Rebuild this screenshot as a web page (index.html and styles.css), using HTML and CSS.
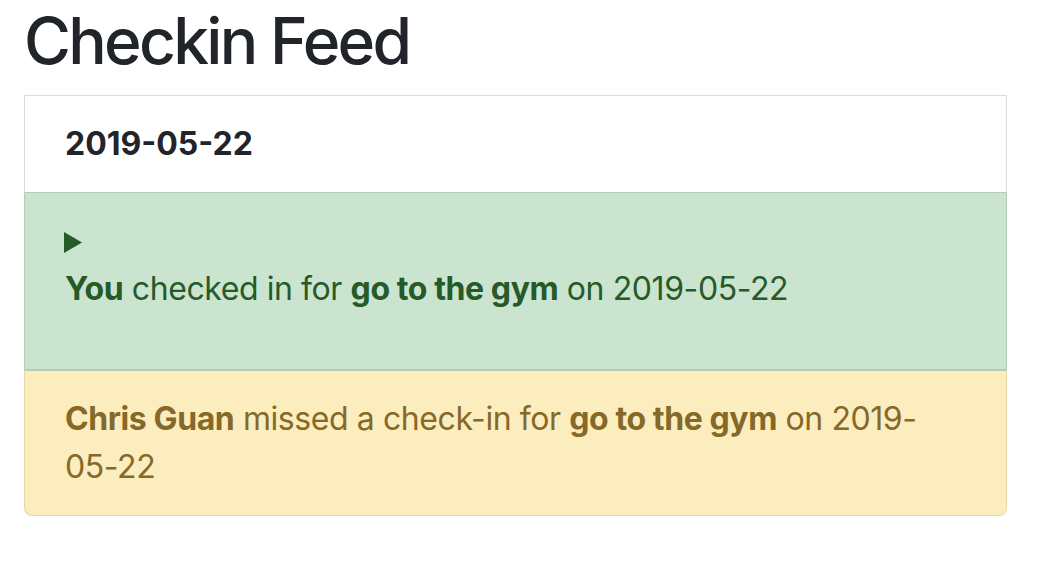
FILE: index.html
```html
<!DOCTYPE html>
<html>
<head>
<meta charset="utf-8">
<link rel="stylesheet" href="styles.css">
</head>
<body>
<main class="page">
  <h2 class="title">Checkin Feed</h2>
  <ul class="feed">
    <li class="item item-head"><strong>2019-05-22</strong></li>
    <li class="item item-success">
      <div class="summary"><svg class="marker" width="18" height="21" viewBox="0 0 18 21"><polygon points="0,0 18,10.5 0,21" fill="currentColor"/></svg></div>
      <p class="msg"><strong>You</strong> checked in for <strong>go to the gym</strong> on 2019-05-22</p>
    </li>
    <li class="item item-warning">
      <p class="msg last"><strong>Chris Guan</strong> missed a check-in for <strong>go to the gym</strong> on 2019-05-22</p>
    </li>
  </ul>
</main>
</body>
</html>
```

FILE: styles.css
```css
html, body {
  margin: 0;
  padding: 0;
  background: #fff;
}
body {
  font-family: Inter, "Liberation Sans", sans-serif;
  font-size: 32px;
  line-height: 48px;
  color: #212529;
}
.page {
  padding: 0 24px;
}
.title {
  margin: 0 0 15px 0;
  padding-top: 3px;
  font-size: 64px;
  font-weight: 500;
  line-height: 76.8px;
  letter-spacing: -0.042em;
  color: #212529;
}
.feed {
  list-style: none;
  margin: 0;
  padding: 0;
  width: 983px;
}
.item {
  padding: 24px 40px;
  border: 1px solid #dcdcdc;
}
.item + .item {
  border-top: 0;
}
.item-head {
  background: #fff;
  border-bottom: 1px solid #b4ceb6;
}
.item-success,
.item-warning {
  letter-spacing: -0.013em;
}
.item-success {
  background: #cbe4cf;
  color: #265a28;
  border-color: #b4ceb6;
}
.item-warning {
  background: #fcedbf;
  color: #866828;
  border-color: #e6d6a5;
  border-top: 1px solid #b4ceb6 !important;
  border-radius: 0 0 8px 8px;
}
.summary {
  height: 48px;
  display: flex;
  align-items: center;
}
.marker {
  display: block;
  width: 18px;
  height: 21px;
  margin-top: 4px;
  margin-left: -1px;
}
.msg {
  margin: 0 0 32px 0;
}
.msg.last {
  margin: 0;
}
strong {
  font-weight: 700;
}
```
